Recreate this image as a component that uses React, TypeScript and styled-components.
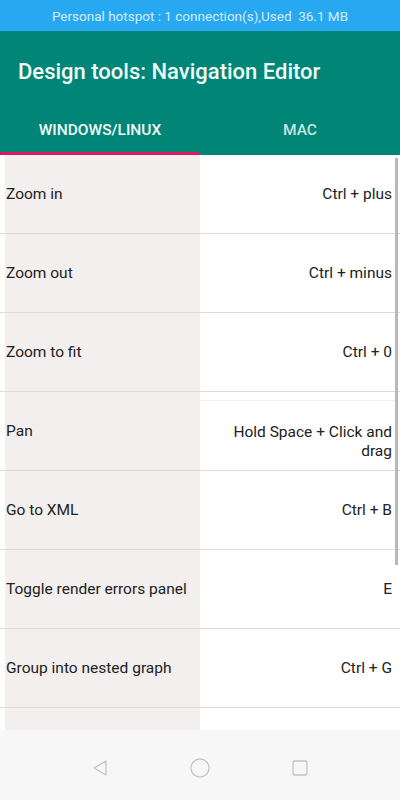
import { FC } from "react";
import styled, { createGlobalStyle } from "styled-components";

const shortcuts = [
  { action: "Zoom in", keys: "Ctrl + plus" },
  { action: "Zoom out", keys: "Ctrl + minus" },
  { action: "Zoom to fit", keys: "Ctrl + 0" },
  { action: "Pan", keys: "Hold Space + Click and drag", shifted: true },
  { action: "Go to XML", keys: "Ctrl + B" },
  { action: "Toggle render errors panel", keys: "E" },
  { action: "Group into nested graph", keys: "Ctrl + G" },
  { action: "", keys: "" },
];

const App: FC = () => {
  return (
    <Screen>
      <GlobalStyle />
      <StatusBar>Personal hotspot : 1 connection(s),Used&nbsp; 36.1 MB</StatusBar>
      <AppBar>
        <Title>Design tools: Navigation Editor</Title>
        <Tabs>
          <Tab active>WINDOWS/LINUX</Tab>
          <Tab>MAC</Tab>
        </Tabs>
      </AppBar>
      <Content>
        <List>
          {shortcuts.map((s, i) => (
            <Row key={i}>
              <ActionCell>{s.action}</ActionCell>
              <KeysCell shifted={s.shifted}>{s.keys}</KeysCell>
            </Row>
          ))}
        </List>
        <ScrollThumb />
      </Content>
      <NavBar>
        <svg width="18" height="18" viewBox="0 0 18 18">
          <path
            d="M15 2 L3 9 L15 16 Z"
            fill="none"
            stroke="#c4c4c4"
            strokeWidth="1.3"
            strokeLinejoin="round"
          />
        </svg>
        <svg width="20" height="20" viewBox="0 0 20 20">
          <circle cx="10" cy="10" r="9" fill="none" stroke="#c4c4c4" strokeWidth="1.3" />
        </svg>
        <svg width="18" height="18" viewBox="0 0 18 18">
          <rect x="2" y="2" width="14" height="14" rx="1.5" fill="none" stroke="#c4c4c4" strokeWidth="1.3" />
        </svg>
      </NavBar>
    </Screen>
  );
};

export default App;

const GlobalStyle = createGlobalStyle`
  html, body {
    margin: 0;
    padding: 0;
    background: #ffffff;
  }
  body {
    font-family: Roboto, "Noto Sans", sans-serif;
  }
`;

const Screen = styled.div`
  width: 400px;
  height: 800px;
  display: flex;
  flex-direction: column;
  overflow: hidden;
`;

const StatusBar = styled.div`
  height: 31px;
  flex-shrink: 0;
  background: #27a8f0;
  color: #d6ecfa;
  font-size: 13.5px;
  display: flex;
  align-items: center;
  justify-content: center;
`;

const AppBar = styled.div`
  background: #008577;
  flex-shrink: 0;
  display: flex;
  flex-direction: column;
`;

const Title = styled.div`
  height: 81px;
  padding-left: 18px;
  display: flex;
  align-items: center;
  color: #f0faf7;
  font-size: 22px;
  font-weight: 500;
`;

const Tabs = styled.div`
  display: flex;
  height: 43px;
`;

const Tab = styled.div<{ active?: boolean }>`
  flex: 1;
  display: flex;
  align-items: center;
  justify-content: center;
  padding-bottom: 4px;
  font-size: 15.5px;
  font-weight: 500;
  color: ${(p) => (p.active ? "#f4fbf9" : "#c8e6e0")};
  border-bottom: 3px solid ${(p) => (p.active ? "#d81b60" : "transparent")};
  box-sizing: border-box;
`;

const Content = styled.div`
  position: relative;
  flex: 1;
  overflow: hidden;
`;

const List = styled.div`
  display: flex;
  flex-direction: column;
`;

const Row = styled.div`
  display: flex;
  height: 79px;
  flex-shrink: 0;
  border-bottom: 1px solid #dcdcdc;
  box-sizing: border-box;
  padding-left: 5px;
  padding-right: 5px;
  font-size: 15.5px;
  color: #222222;
`;

const ActionCell = styled.div`
  width: 195px;
  flex-shrink: 0;
  background: #f2efee;
  display: flex;
  align-items: center;
  padding-left: 1px;
  box-sizing: border-box;
`;

const KeysCell = styled.div<{ shifted?: boolean }>`
  flex: 1;
  display: flex;
  align-items: center;
  justify-content: flex-end;
  text-align: right;
  padding-left: 8px;
  padding-right: 3px;
  padding-top: ${(p) => (p.shifted ? "13px" : "0")};
  line-height: 19px;
  margin-top: ${(p) => (p.shifted ? "8px" : "0")};
  border-top: ${(p) => (p.shifted ? "1px solid #f0f0f0" : "none")};
`;

const ScrollThumb = styled.div`
  position: absolute;
  right: 2px;
  top: 3px;
  width: 3px;
  height: 407px;
  background: #b8b8b8;
`;

const NavBar = styled.div`
  height: 70px;
  flex-shrink: 0;
  background: #f7f7f7;
  display: flex;
  align-items: center;
  justify-content: space-around;
  padding: 0 50px;
  box-sizing: border-box;
  & > svg {
    margin-top: 6px;
  }
`;
